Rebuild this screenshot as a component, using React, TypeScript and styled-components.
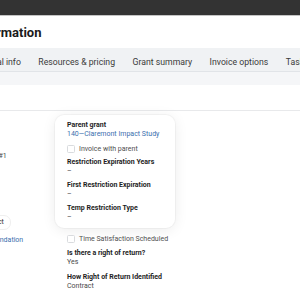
import React from "react";
import styled, { createGlobalStyle } from "styled-components";

const Global = createGlobalStyle`
  html, body { margin: 0; padding: 0; background: #fff; overflow: hidden; }
  body { font-family: Roboto, "Noto Sans", sans-serif; color: #1f1f1f; }
`;

const Viewport = styled.div`
  width: 300px;
  height: 300px;
  overflow: hidden;
`;

const Page = styled.div`
  width: 460px;
  margin-left: -80px;
  display: flex;
  flex-direction: column;
`;

const TopBar = styled.div`
  height: 15px;
  background: #333333;
  border-bottom: 1px solid #c4c4c4;
`;

const TitleRow = styled.div`
  height: 32px;
  display: flex;
  align-items: center;
  padding-left: 18px;
`;

const Title = styled.h1`
  margin: 0;
  font-size: 13px;
  font-weight: 700;
  color: #1a1a1a;
`;

const TabBar = styled.nav`
  height: 23px;
  background: #f0f2f4;
  border-bottom: 1px solid #e1e4e8;
  display: flex;
  align-items: flex-end;
  padding-left: 45.5px;
`;

const Tab = styled.div`
  padding: 0 8.75px 4px;
  font-size: 8.7px;
  color: #3a3a3a;
  white-space: nowrap;
`;

const SubBar = styled.div`
  height: 13px;
  background: #f5f6f8;
`;

const Gap = styled.div`
  height: 25px;
`;

const Body = styled.div`
  border-top: 1px solid #e8e9eb;
  display: grid;
  grid-template-columns: 135px 120px 1fr;
  padding-top: 4px;
`;

const Column = styled.div<{ $pad?: number }>`
  display: flex;
  flex-direction: column;
  align-items: flex-start;
  gap: 6px;
  padding-left: ${(p) => p.$pad ?? 0}px;
`;

const Label = styled.div`
  font-size: 7px;
  line-height: 9px;
  font-weight: 700;
  color: #1e1e1e;
  white-space: nowrap;
`;

const Value = styled.div<{ $link?: boolean }>`
  font-size: 7px;
  line-height: 9px;
  color: ${(p) => (p.$link ? "#3b6fae" : "#4a4a4a")};
  white-space: nowrap;
`;

const Field = styled.div<{ $top?: number }>`
  display: flex;
  flex-direction: column;
  align-items: flex-start;
  margin-top: ${(p) => p.$top ?? 0}px;
`;

const Card = styled.div`
  align-self: stretch;
  margin: 0 0 0 -12px;
  padding: 6px 12px 6px;
  border-radius: 9px;
  background: #fff;
  box-shadow: 0 2px 14px rgba(0, 0, 0, 0.08), 0 0 0 1px rgba(0, 0, 0, 0.03);
  display: flex;
  flex-direction: column;
  align-items: flex-start;
  gap: 5px;
`;

const CheckRow = styled.label`
  display: flex;
  align-items: center;
  gap: 4px;
  height: 9px;
  font-size: 7px;
  color: #4f4f4f;
  white-space: nowrap;
`;

const Box = styled.span`
  width: 6px;
  height: 6px;
  border: 1px solid #d9dbde;
  border-radius: 1.5px;
  background: #fff;
`;

const Pill = styled.span`
  padding: 2px 6px;
  border: 1px solid #efefef;
  border-radius: 7px;
  font-size: 7px;
  line-height: 9px;
  color: #333;
`;

export default function App() {
  return (
    <Viewport>
      <Global />
      <Page>
        <TopBar />
        <TitleRow>
          <Title>Grant information</Title>
        </TitleRow>
        <TabBar>
          <Tab>General info</Tab>
          <Tab>Resources &amp; pricing</Tab>
          <Tab>Grant summary</Tab>
          <Tab>Invoice options</Tab>
          <Tab>Tasks</Tab>
        </TabBar>
        <SubBar />
        <Gap />
        <Body>
          <Column $pad={34}>
            <Field $top={27.5}>
              <Label>Cycle</Label>
              <Value>Funding cycle #1</Value>
            </Field>
            <Field $top={39}>
              <Label>Status</Label>
              <Pill>Draft contract</Pill>
            </Field>
            <Value $link>Claremont Foundation</Value>
          </Column>
          <Column $pad={12}>
            <Card>
              <Field>
                <Label>Parent grant</Label>
                <Value $link>140—Claremont Impact Study</Value>
              </Field>
              <CheckRow>
                <Box />
                <span>Invoice with parent</span>
              </CheckRow>
              <Field>
                <Label>Restriction Expiration Years</Label>
                <Value>–</Value>
              </Field>
              <Field>
                <Label>First Restriction Expiration</Label>
                <Value>–</Value>
              </Field>
              <Field>
                <Label>Temp Restriction Type</Label>
                <Value>–</Value>
              </Field>
            </Card>
            <CheckRow>
              <Box />
              <span>Time Satisfaction Scheduled</span>
            </CheckRow>
            <Field>
              <Label>Is there a right of return?</Label>
              <Value>Yes</Value>
            </Field>
            <Field>
              <Label>How Right of Return Identified</Label>
              <Value>Contract</Value>
            </Field>
          </Column>
          <div />
        </Body>
      </Page>
    </Viewport>
  );
}
